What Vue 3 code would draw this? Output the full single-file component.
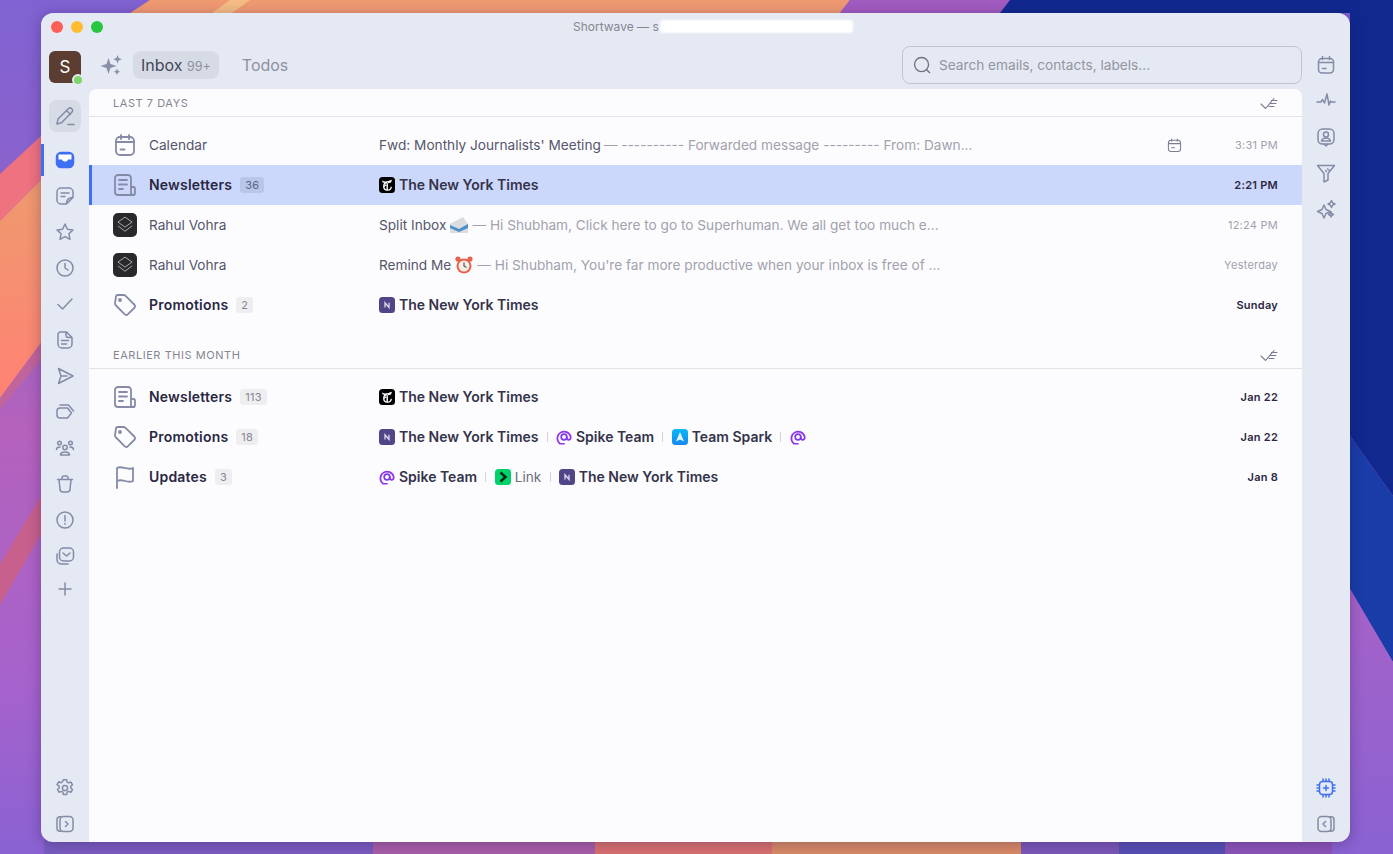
<template>
  <div class="wallpaper">
    <svg class="wall-art" viewBox="0 0 1393 854" preserveAspectRatio="none">
      <defs>
        <linearGradient id="wl" x1="0" y1="0" x2="0" y2="1">
          <stop offset="0" stop-color="#8062d2" />
          <stop offset="0.2" stop-color="#8a62cc" />
          <stop offset="0.5" stop-color="#b462bc" />
          <stop offset="0.8" stop-color="#a662cc" />
          <stop offset="1" stop-color="#8a62d2" />
        </linearGradient>
        <linearGradient id="wo" x1="0" y1="0" x2="0" y2="1">
          <stop offset="0" stop-color="#ee9a6e" />
          <stop offset="1" stop-color="#ff8274" />
        </linearGradient>
        <linearGradient id="wr" x1="0" y1="0" x2="0" y2="1">
          <stop offset="0" stop-color="#a662c8" />
          <stop offset="1" stop-color="#8a62d2" />
        </linearGradient>
      </defs>
      <rect width="1393" height="854" fill="url(#wl)" />
      <polygon points="0,174 41,136 41,180 0,221" fill="#ef7280" />
      <polygon points="0,221 41,180 41,343 0,398" fill="url(#wo)" />
      <polygon points="0,398 41,343 41,360 0,409" fill="#c0649c" />
      <polygon points="0,564 41,496 41,534 0,605" fill="#c8608e" />
      <polygon points="150,0 850,0 840,13 130,13" fill="#f09a72" />
      <polygon points="230,0 250,0 232,13 212,13" fill="#f5bd85" />
      <polygon points="850,0 1010,0 1000,13 840,13" fill="#a25cc0" />
      <polygon points="1010,0 1393,0 1393,496 1350,436 1350,13 1000,13" fill="#11298f" />
      <polygon points="1350,436 1393,496 1393,662 1350,589" fill="#1a3ca8" />
      <polygon points="1350,589 1393,662 1393,854 1350,854" fill="url(#wr)" />
      <rect x="44" y="838" width="329" height="16" fill="#7a5cc0" />
      <rect x="373" y="838" width="222" height="16" fill="#a85ea8" />
      <rect x="595" y="838" width="177" height="16" fill="#d87070" />
      <rect x="772" y="838" width="249" height="16" fill="#d88a66" />
      <rect x="1021" y="838" width="98" height="16" fill="#7c58b8" />
      <rect x="1119" y="838" width="106" height="16" fill="#5850b4" />
      <rect x="1225" y="838" width="107" height="16" fill="#8c56b8" />
    </svg>

    <div class="window">
      <div class="titlebar">
        <div class="lights">
          <span class="dot red"></span>
          <span class="dot yellow"></span>
          <span class="dot green"></span>
        </div>
        <div class="title">Shortwave — s<span class="smudge"></span></div>
      </div>

      <div class="main">
        <aside class="rail">
          <div class="avatar">S<span class="online"></span></div>
          <button class="compose">
            <svg viewBox="0 0 24 24" class="ic24"><path d="M4 20l1-5L15.500 4.500a2.500 2.500 0 0 1 3.500 3.500L8.500 18.700zM14 7l3.500 3.500M15 20.500h6" /></svg>
          </button>
          <div class="rail-list">
            <div v-for="item in railIcons" :key="item.id" class="rail-item" :class="{ active: item.active, plus: item.id === 'plus' }">
              <svg viewBox="0 0 20 20" class="ic20" v-html="item.svg"></svg>
            </div>
          </div>
          <div class="rail-bottom">
            <div class="rail-item">
              <svg viewBox="0 0 20 20" class="ic20"><circle cx="10" cy="10" r="2.600" /><path d="M8.400 1.800h3.200l.5 2.300 1.500.8 2.200-.9 1.700 2.800-1.700 1.500v1.700l1.700 1.500-1.700 2.800-2.200-.9-1.500.8-.5 2.300H8.400l-.5-2.300-1.500-.8-2.200.9-1.700-2.800 1.700-1.500V8.100L2 6.600l1.700-2.800 2.200.9 1.500-.8z" /></svg>
            </div>
            <div class="rail-item">
              <svg viewBox="0 0 20 20" class="ic20"><rect x="5" y="2.500" width="13" height="15" rx="3.500" /><path d="M6 2.700H5A3 3 0 0 0 2 5.700v8.600a3 3 0 0 0 3 3h1M10.500 7.500L13 10l-2.500 2.500" /></svg>
            </div>
          </div>
        </aside>

        <div class="center">
          <header class="topbar">
            <svg viewBox="0 0 24 24" class="spark"><path d="M9.500 5l2 6 6 2-6 2-2 6-2-6-6-2 6-2zM18.500 2l1.200 3 3 1.200-3 1.200-1.200 3-1.200-3-3-1.200 3-1.200zM18 15.500l1 2.200 2.200 1-2.200 1-1 2.200-1-2.200-2.200-1 2.200-1z" /></svg>
            <div class="tab selected">Inbox <span class="tab-count">99+</span></div>
            <div class="tab">Todos</div>
            <div class="search">
              <svg viewBox="0 0 20 20" class="search-ic"><circle cx="9.500" cy="9.500" r="7.800" /><path d="M15.200 15.200L18.500 18.500" /></svg>
              <span>Search emails, contacts, labels...</span>
            </div>
          </header>

          <div class="list">
            <section v-for="section in sections" :key="section.title" class="section">
              <div class="section-head">
                <span>{{ section.title }}</span>
                <svg viewBox="0 0 18 12" class="check-all"><path d="M1 7l4.500 4.500L14 1.500M11.500 3.500h5.500M10.500 6.500h5.500M9 9.500h5" /></svg>
              </div>
              <div class="rows">
                <div v-for="row in section.rows" :key="row.id" class="row" :class="{ selected: row.selected, unread: row.unread }">
                  <div class="row-icon">
                    <svg v-if="row.icon === 'calendar'" viewBox="0 0 24 24" class="ic-row"><rect x="3" y="4" width="18" height="18" rx="4" /><path d="M3 9h18M8 2v4M16 2v4M7.500 16.500h4" /></svg>
                    <svg v-else-if="row.icon === 'news'" viewBox="0 0 24 24" class="ic-row"><path d="M18 13V5a3 3 0 0 0-3-3H5a3 3 0 0 0-3 3v14a3 3 0 0 0 3 3h16" /><path d="M18 14h2.500a1.500 1.500 0 0 1 1.500 1.500V20a2 2 0 0 1-4 0v-6zM6 7h8M6 11.500h8M6 16h4" /></svg>
                    <svg v-else-if="row.icon === 'tag'" viewBox="0 0 24 24" class="ic-row"><path d="M3 3.500A1.500 1.500 0 0 1 4.500 2h6a3 3 0 0 1 2.100.9l8.600 8.600a2.500 2.500 0 0 1 0 3.500l-6.200 6.200a2.500 2.500 0 0 1-3.500 0L3 12.500a3 3 0 0 1-1-2.100z" /><circle cx="7" cy="7" r="1" /></svg>
                    <svg v-else-if="row.icon === 'flag'" viewBox="0 0 24 24" class="ic-row"><path d="M4 23V3c5-3 10 3 16 0v13c-6 3-10-3-16 0" /></svg>
                    <div v-else class="superhuman">
                      <svg viewBox="0 0 24 24"><path d="M12 2.500l8.500 6-8.500 6-8.500-6zM3.500 13l8.500 6.500 8.500-6.500" /></svg>
                    </div>
                  </div>
                  <div class="sender">
                    <span>{{ row.sender }}</span>
                    <span v-if="row.count" class="badge">{{ row.count }}</span>
                  </div>
                  <div class="body">
                    <template v-if="row.subject">
                      <span class="subject">{{ row.subject }}</span>
                      <svg v-if="row.emoji === 'mail'" viewBox="0 0 20 20" class="emoji"><path d="M1 9l13-7 5 7v9H1z" fill="#d9dde0" /><path d="M1 10l9 4 9-5v4l-9 4-9-4z" fill="#4c8fc9" /></svg>
                      <svg v-if="row.emoji === 'clock'" viewBox="0 0 20 20" class="emoji"><circle cx="10" cy="11" r="7.500" fill="#e8604c" /><circle cx="10" cy="11" r="5.500" fill="#f3efe6" /><path d="M10 7.500V11l2.500 1.500" fill="none" stroke="#555" stroke-width="1.200" /><circle cx="4" cy="4" r="2.600" fill="#e8604c" /><circle cx="16" cy="4" r="2.600" fill="#e8604c" /></svg>
                      <span class="preview">— {{ row.preview }}</span>
                    </template>
                    <template v-else>
                      <template v-for="(s, i) in row.senders" :key="i">
                        <span v-if="i > 0" class="sep"></span>
                        <span class="mini-sender">
                          <svg v-if="s.logo === 'nyt'" viewBox="0 0 16 16" class="logo"><rect width="16" height="16" rx="3.500" fill="#000" /><path d="M8.500 5.500a3.800 3.800 0 1 0 3.800 4.200" fill="none" stroke="#fff" stroke-width="1.300" /><path d="M3 3.500c3.500 1.800 6 .5 10-.8L12 5.500c-3 1-6 .8-8.500-.3zM7.500 5v8l1.400.3V5zM5 8.500l3-2v1.400l-3 2z" fill="#fff" /></svg>
                          <svg v-else-if="s.logo === 'n'" viewBox="0 0 16 16" class="logo"><rect width="16" height="16" rx="3.500" fill="#514487" /><path d="M6 10.500V5.800l4 4.700V5.800" fill="none" stroke="#dfdcf0" stroke-width="1.300" /></svg>
                          <svg v-else-if="s.logo === 'spike'" viewBox="-0.500 -0.500 17 17" class="logo"><path d="M8 15.200H3.800A7.200 7.200 0 1 1 15.200 8c0 1.900-.9 3.100-2.300 3.100S10.900 9.900 10.900 8" fill="none" stroke="#9333ea" stroke-width="1.800" stroke-linecap="round" /><circle cx="8" cy="8" r="3" fill="none" stroke="#7c3aed" stroke-width="1.800" /></svg>
                          <svg v-else-if="s.logo === 'spark'" viewBox="0 0 16 16" class="logo"><defs><linearGradient id="sparkbg" x1="0" y1="0" x2="0" y2="1"><stop offset="0" stop-color="#0ab8f5" /><stop offset="1" stop-color="#1488f0" /></linearGradient></defs><rect width="16" height="16" rx="3.500" fill="url(#sparkbg)" /><path d="M8 3l4 9.500-4-2-4 2z" fill="#e6f5ff" /></svg>
                          <svg v-else-if="s.logo === 'link'" viewBox="0 0 16 16" class="logo"><rect width="16" height="16" rx="3.500" fill="#00d26a" /><path d="M5.500 3.500L10.500 8l-5 4.500" fill="none" stroke="#0b2a18" stroke-width="2.400" /></svg>
                          <span v-if="s.name" class="mini-name" :class="{ thin: s.thin }">{{ s.name }}</span>
                        </span>
                      </template>
                    </template>
                  </div>
                  <svg v-if="row.attach" viewBox="0 0 16 16" class="attach"><rect x="1.500" y="2.500" width="13" height="12" rx="3" /><path d="M1.500 6h13M5 1v2.500M11 1v2.500M5 10.500h3" /></svg>
                  <div class="time">{{ row.time }}</div>
                </div>
              </div>
            </section>
          </div>
        </div>

        <aside class="rail-right">
          <div class="rail-list-right">
            <div v-for="item in rightIcons" :key="item.id" class="rail-item">
              <svg viewBox="0 0 20 20" class="ic20" v-html="item.svg"></svg>
            </div>
          </div>
          <div class="rail-bottom">
            <div class="rail-item chip">
              <svg viewBox="0 0 20 20" class="ic20"><rect x="3.500" y="3.500" width="13" height="13" rx="3" /><path d="M7 1v2M10 1v2M13 1v2M7 17v2M10 17v2M13 17v2M1 7h2M1 10h2M1 13h2M17 7h2M17 10h2M17 13h2M7.500 10h5M10 7.500v5" /></svg>
            </div>
            <div class="rail-item">
              <svg viewBox="0 0 20 20" class="ic20"><rect x="2" y="2.500" width="13" height="15" rx="3.500" /><path d="M14 2.700h1a3 3 0 0 1 3 3v8.600a3 3 0 0 1-3 3h-1M9.500 7.500L7 10l2.500 2.500" /></svg>
            </div>
          </div>
        </aside>
      </div>
    </div>
  </div>
</template>

<script setup>
const railIcons = [
  { id: 'inbox', active: true, svg: '<rect x="1.500" y="2.500" width="17" height="15" rx="4.500" fill="#3f6ff2" stroke="#3f6ff2"/><path d="M3.500 4.500h13v5h-3.500c-.5 1.500-1.500 2-3 2s-2.500-.5-3-2H3.500z" fill="#fff" stroke="none"/>' },
  { id: 'notes', svg: '<path d="M11.500 18H6a4 4 0 0 1-4-4V6a4 4 0 0 1 4-4h8a4 4 0 0 1 4 4v5.500zM11.500 18c0-4 2-6.500 6.500-6.500M6 7h8M6 10.500h4"/>' },
  { id: 'star', svg: '<path d="M10 2l2.400 5.200 5.600.7-4.100 3.900 1.100 5.600-5-2.800-5 2.800 1.100-5.600L2 7.900l5.600-.7z"/>' },
  { id: 'clock', svg: '<circle cx="10" cy="10" r="8"/><path d="M10 5.500V10l3 2"/>' },
  { id: 'check', svg: '<path d="M3 10.500l4.500 4.500L17 5"/>' },
  { id: 'doc', svg: '<path d="M5.500 2h6L17 7.500V14a4 4 0 0 1-4 4H7a4 4 0 0 1-4-4V4.500A2.500 2.500 0 0 1 5.500 2zM11 2.500V5a2.500 2.500 0 0 0 2.500 2.500H16.500M6.500 10.500h7M6.500 14h5"/>' },
  { id: 'send', svg: '<path d="M3.500 2.500l14.500 7.500-14.500 7.500 2.500-7.500zM6 10H12"/>' },
  { id: 'labels', svg: '<path d="M2 9a3 3 0 0 1 3-3h7.500l4 5-4 5H5a3 3 0 0 1-3-3zM5 3h8.500l5 6"/>' },
  { id: 'people', svg: '<circle cx="10" cy="9.500" r="2.200"/><circle cx="4.500" cy="5" r="1.800"/><circle cx="15.500" cy="5" r="1.800"/><path d="M5.500 17c0-2 2-3 4.500-3s4.500 1 4.500 3zM1.500 11.500c0-1.500 1.300-2.500 3.500-2.500M18.500 11.500c0-1.500-1.300-2.500-3.500-2.500"/>' },
  { id: 'trash', svg: '<path d="M2.500 5.500h15M7 5V4a2 2 0 0 1 2-2h2a2 2 0 0 1 2 2v1M4 6l1 9a3 3 0 0 0 3 3h4a3 3 0 0 0 3-3l1-9"/>' },
  { id: 'spam', svg: '<circle cx="10" cy="10" r="8"/><path d="M10 5.500v5.500M10 13.500v.8"/>' },
  { id: 'all', svg: '<rect x="4.500" y="2" width="14" height="13" rx="4"/><path d="M8 7l3.500 3L15 7M2 8v5.500A4.500 4.500 0 0 0 6.500 18H13"/>' },
  { id: 'plus', svg: '<path d="M10 4v12M4 10h12"/>' }
]

const rightIcons = [
  { id: 'cal', svg: '<rect x="2.500" y="3.500" width="15" height="14.500" rx="3.500"/><path d="M2.500 7.500h15M6.500 1.500v3M13.500 1.500v3M6.500 13.500h3.500"/>' },
  { id: 'pulse', svg: '<path d="M1 11h4l1.500-2.500L8.500 12 11 3l2 11 1.500-4 1 1h3.500"/>' },
  { id: 'contact', svg: '<rect x="2" y="2" width="16" height="15" rx="4.500"/><circle cx="10" cy="7.500" r="2.500"/><path d="M5.500 14c.6-2 2.300-3 4.500-3s3.900 1 4.500 3zM8 17l2 2 2-2"/>' },
  { id: 'filter', svg: '<path d="M1.500 2.500h17l-6.500 8v6.500l-4 2v-8.500zM11.500 6l1.500 1M9.500 7.500l1 1"/>' },
  { id: 'ai', svg: '<path d="M8 6l2 4.500 4.500 2-4.500 2L8 19l-2-4.500-4.500-2 4.500-2zM15.500 1.500l1.200 2.300 2.300 1.200-2.300 1.200-1.200 2.300-1.200-2.300L12 5l2.300-1.200zM15 13l.8 1.700 1.700.8-1.700.8-.8 1.700-.8-1.700-1.700-.8 1.700-.8z"/>' }
]

const sections = [
  {
    title: 'LAST 7 DAYS',
    rows: [
      { id: 1, icon: 'calendar', sender: 'Calendar', subject: "Fwd: Monthly Journalists' Meeting", preview: '---------- Forwarded message --------- From: Dawn...', attach: true, time: '3:31 PM' },
      { id: 2, icon: 'news', sender: 'Newsletters', count: 36, unread: true, selected: true, senders: [{ logo: 'nyt', name: 'The New York Times' }], time: '2:21 PM' },
      { id: 3, icon: 'superhuman', sender: 'Rahul Vohra', subject: 'Split Inbox', emoji: 'mail', preview: 'Hi Shubham, Click here to go to Superhuman. We all get too much e...', time: '12:24 PM' },
      { id: 4, icon: 'superhuman', sender: 'Rahul Vohra', subject: 'Remind Me', emoji: 'clock', preview: "Hi Shubham, You're far more productive when your inbox is free of ...", time: 'Yesterday' },
      { id: 5, icon: 'tag', sender: 'Promotions', count: 2, unread: true, senders: [{ logo: 'n', name: 'The New York Times' }], time: 'Sunday' }
    ]
  },
  {
    title: 'EARLIER THIS MONTH',
    rows: [
      { id: 6, icon: 'news', sender: 'Newsletters', count: 113, unread: true, senders: [{ logo: 'nyt', name: 'The New York Times' }], time: 'Jan 22' },
      { id: 7, icon: 'tag', sender: 'Promotions', count: 18, unread: true, senders: [{ logo: 'n', name: 'The New York Times' }, { logo: 'spike', name: 'Spike Team' }, { logo: 'spark', name: 'Team Spark' }, { logo: 'spike' }], time: 'Jan 22' },
      { id: 8, icon: 'flag', sender: 'Updates', count: 3, unread: true, senders: [{ logo: 'spike', name: 'Spike Team' }, { logo: 'link', name: 'Link', thin: true }, { logo: 'n', name: 'The New York Times' }], time: 'Jan 8' }
    ]
  }
]
</script>

<style>
html, body {
  margin: 0;
  height: 100%;
  overflow: hidden;
}
</style>

<style scoped>
.wallpaper {
  position: relative;
  width: 1393px;
  height: 854px;
  padding: 13px 43px 12px 41px;
  box-sizing: border-box;
  overflow: hidden;
  font-family: Inter, "Liberation Sans", sans-serif;
}
.wall-art {
  position: absolute;
  left: 0;
  top: 0;
  width: 100%;
  height: 100%;
}
.window {
  position: relative;
  display: flex;
  flex-direction: column;
  height: 100%;
  background: #e5e9f4;
  border-radius: 12px;
  overflow: hidden;
  box-shadow: 0 2px 14px rgba(20, 10, 60, 0.3);
}
.titlebar {
  position: relative;
  height: 33px;
  flex: none;
}
.lights {
  display: flex;
  gap: 8px;
  padding: 8px 0 0 10px;
}
.dot {
  width: 12px;
  height: 12px;
  border-radius: 50%;
}
.dot.red { background: #fe5f57; }
.dot.yellow { background: #febc2e; }
.dot.green { background: #28c73f; }
.title {
  position: absolute;
  left: 532px;
  top: 6px;
  font-size: 12px;
  line-height: 16px;
  color: #85868f;
  display: flex;
}
.smudge {
  position: absolute;
  left: 87px;
  top: 1px;
  width: 193px;
  height: 13px;
  background: #fff;
  border-radius: 3px;
  filter: blur(1px);
}
.main {
  flex: 1;
  display: flex;
  min-height: 0;
}
.rail {
  width: 48px;
  flex: none;
  display: flex;
  flex-direction: column;
  align-items: center;
}
.avatar {
  position: relative;
  width: 32px;
  height: 32px;
  margin-top: 5px;
  border-radius: 6px;
  background: #5b3d31;
  color: #fff;
  font-size: 17px;
  display: flex;
  align-items: center;
  justify-content: center;
}
.online {
  position: absolute;
  right: -3px;
  bottom: -3px;
  width: 8px;
  height: 8px;
  border-radius: 50%;
  background: #7ed668;
  border: 2px solid #e5e9f4;
}
.compose {
  width: 32px;
  height: 32px;
  margin-top: 17px;
  padding: 0;
  border: none;
  border-radius: 8px;
  background: #d7dbe6;
  display: flex;
  align-items: center;
  justify-content: center;
}
svg.ic24, svg.ic20 {
  fill: none;
  stroke: #858ba6;
  stroke-width: 1.500;
  stroke-linecap: round;
  stroke-linejoin: round;
}
.ic24 {
  width: 24px;
  height: 24px;
}
.ic20 {
  width: 20px;
  height: 20px;
}
.rail-list {
  width: 100%;
  margin-top: 10px;
  display: flex;
  flex-direction: column;
}
.rail-item {
  position: relative;
  width: 100%;
  height: 36px;
  display: flex;
  align-items: center;
  justify-content: center;
}
.rail-item.plus {
  margin-top: -3px;
}
.rail-item.active::before {
  content: "";
  position: absolute;
  left: 0;
  top: 2px;
  width: 3px;
  height: 32px;
  background: #3f6ff2;
}
.rail-bottom {
  width: 100%;
  margin-top: auto;
  display: flex;
  flex-direction: column;
}
.center {
  flex: 1;
  min-width: 0;
  display: flex;
  flex-direction: column;
}
.topbar {
  height: 38px;
  margin-bottom: 5px;
  flex: none;
  display: flex;
  align-items: center;
  padding-left: 10px;
}
svg.spark {
  width: 24px;
  height: 24px;
  fill: #8b90a8;
  margin-right: 10px;
}
.tab {
  height: 28px;
  padding: 0 8px;
  border-radius: 8px;
  font-size: 16px;
  line-height: 28px;
  color: #8e919f;
}
.tab.selected {
  background: #d7dbe6;
  color: #44475a;
  margin-right: 15px;
}
.tab-count {
  font-size: 12.500px;
  color: #8e919f;
}
.search {
  margin-left: auto;
  width: 400px;
  height: 38px;
  box-sizing: border-box;
  display: flex;
  align-items: center;
  gap: 8px;
  padding-left: 10px;
  border: 1px solid #c2c5cf;
  border-radius: 8px;
  font-size: 13.650px;
  color: #93959f;
}
svg.search-ic {
  width: 18px;
  height: 18px;
  fill: none;
  stroke: #6f7283;
  stroke-width: 1.500;
  stroke-linecap: round;
}
.list {
  flex: 1;
  background: #fcfcff;
  border-radius: 8px 8px 0 0;
}
.section {
  margin-bottom: 16px;
}
.section-head {
  height: 28px;
  box-sizing: border-box;
  padding: 0 24px;
  border-bottom: 1px solid #e2e3e8;
  display: flex;
  align-items: center;
  justify-content: space-between;
  font-size: 11px;
  letter-spacing: 0.55px;
  color: #85868f;
}
svg.check-all {
  width: 18px;
  height: 12px;
  fill: none;
  stroke: #7a7d90;
  stroke-width: 1.100;
  stroke-linecap: round;
}
.rows {
  padding-top: 8px;
}
.row {
  position: relative;
  height: 40px;
  box-sizing: border-box;
  padding: 0 24px;
  display: flex;
  align-items: center;
  font-size: 13.650px;
  color: #55566a;
}
.row.selected {
  background: #ccd8fb;
}
.row.selected::before {
  content: "";
  position: absolute;
  left: 0;
  top: 0;
  bottom: 0;
  width: 3px;
  background: #3f6ff2;
}
.row-icon {
  width: 36px;
  flex: none;
  display: flex;
}
svg.ic-row {
  width: 24px;
  height: 24px;
  fill: none;
  stroke: #858ba6;
  stroke-width: 1.800;
  stroke-linecap: round;
  stroke-linejoin: round;
}
.superhuman {
  width: 24px;
  height: 24px;
  border-radius: 5px;
  background: #29292b;
  display: flex;
  align-items: center;
  justify-content: center;
}
.superhuman svg {
  width: 20px;
  height: 20px;
  fill: none;
  stroke: #a8a8ac;
  stroke-width: 1.200;
}
.sender {
  width: 230px;
  flex: none;
  display: flex;
  align-items: center;
  gap: 8px;
  padding-bottom: 1px;
}
.unread .sender {
  font-size: 14px;
  font-weight: 600;
  letter-spacing: 0.2px;
  color: #2a2742;
}
.badge {
  height: 16px;
  padding: 0 5px;
  border-radius: 3px;
  background: #eeeef1;
  font-size: 11px;
  font-weight: 400;
  line-height: 16px;
  letter-spacing: 0.3px;
  color: #85868f;
}
.selected .badge {
  background: #b9c6ea;
  color: #5d6480;
}
.body {
  flex: 1;
  min-width: 0;
  display: flex;
  align-items: center;
  white-space: nowrap;
  padding-bottom: 1px;
}
.subject {
  color: #55566a;
}
svg.emoji {
  width: 20px;
  height: 20px;
  margin-left: 3px;
}
.preview {
  margin-left: 3px;
  color: #a1a2ac;
}
.mini-sender {
  display: flex;
  align-items: center;
  gap: 4px;
}
svg.logo {
  width: 16px;
  height: 16px;
}
.mini-name {
  font-size: 14px;
  font-weight: 600;
  color: #34334a;
}
.mini-name.thin {
  font-size: 13.650px;
  font-weight: 400;
  color: #6d6e7d;
}
.sep {
  width: 1px;
  height: 10px;
  margin: 0 8.250px;
  background: #d4d5dc;
}
svg.attach {
  width: 15px;
  height: 15px;
  margin-right: 24px;
  fill: none;
  stroke: #7a7d90;
  stroke-width: 1.100;
  stroke-linecap: round;
}
.time {
  width: 72px;
  flex: none;
  text-align: right;
  font-size: 11px;
  letter-spacing: 0.25px;
  color: #a1a2ac;
}
.unread .time {
  font-weight: 600;
  color: #2a2742;
}
.rail-right {
  width: 48px;
  flex: none;
  display: flex;
  flex-direction: column;
}
.rail-list-right {
  margin-top: 1px;
  display: flex;
  flex-direction: column;
}
.chip svg.ic20 {
  stroke: #3f6ff2;
}
</style>
